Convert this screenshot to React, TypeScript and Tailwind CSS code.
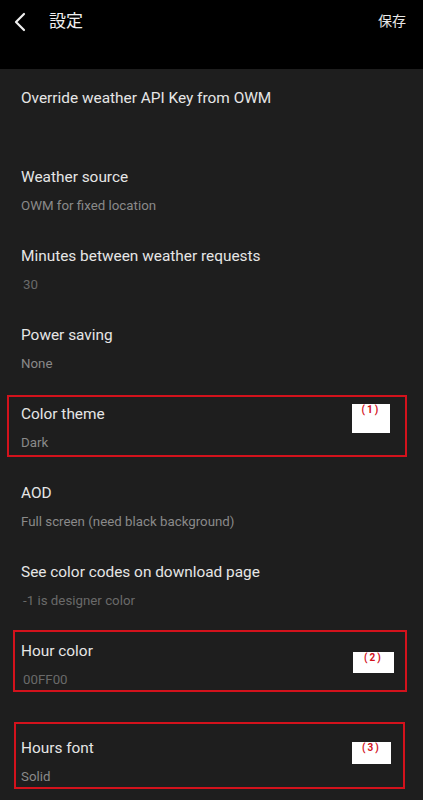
import type { ReactNode } from "react";

type Pref = { title: string; summary?: string; dim?: boolean };

const prefs: Pref[] = [
  { title: "Override weather API Key from OWM" },
  { title: "Weather source", summary: "OWM for fixed location" },
  { title: "Minutes between weather requests", summary: "30", dim: true },
  { title: "Power saving", summary: "None" },
  { title: "Color theme", summary: "Dark" },
  { title: "AOD", summary: "Full screen (need black background)" },
  { title: "See color codes on download page", summary: "-1 is designer color", dim: true },
  { title: "Hour color", summary: "00FF00", dim: true },
];

function Item({ pref, children }: { pref: Pref; children?: ReactNode }) {
  return (
    <div className="relative h-[79px] px-[21px] pt-[19px]">
      <div className="h-5 text-[15.4px] leading-5 text-[#e6e6e6]">{pref.title}</div>
      <div
        className={`mt-[9px] h-5 text-[13.3px] leading-5 ${
          pref.dim ? "pl-[2px] text-[#6a6a6a]" : "text-[#8a8a8a]"
        }`}
      >
        {pref.summary}
      </div>
      {children}
    </div>
  );
}

function Mark({ n, box, label }: { n: number; box: string; label: string }) {
  return (
    <>
      <div className={`pointer-events-none absolute border-2 border-[#d3121c] ${box}`} />
      <div className={`absolute flex justify-center bg-white ${label}`}>
        <span className="text-[10px] font-bold leading-[12px] tracking-[2px] text-[#d3121c]">({n})</span>
      </div>
    </>
  );
}

export default function App() {
  return (
    <div
      className="h-[800px] w-[423px] overflow-hidden bg-[#1e1e1e]"
      style={{ fontFamily: 'Roboto, "Noto Sans CJK JP", sans-serif' }}
    >
      <header className="flex h-[69px] items-start bg-black px-[13px] pt-[10px] text-white">
        <svg width="14" height="22" viewBox="0 0 14 22" className="mt-[1px]">
          <path d="M11 3 L3 11 L11 19" fill="none" stroke="#f0f0f0" strokeWidth="2.2" strokeLinecap="round" strokeLinejoin="round" />
        </svg>
        <h1 className="ml-[22px] text-[17px] leading-[22px] text-[#f0f0f0]">設定</h1>
        <button className="ml-auto mr-[4px] mt-[1px] text-[14px] leading-[20px] text-[#e8e8e8]">保存</button>
      </header>
      <div>
        {prefs.map((p) => (
          <Item key={p.title} pref={p}>
            {p.title === "Color theme" && (
              <Mark n={1} box="left-[7px] top-[10px] h-[62px] w-[400px]" label="left-[352px] top-[19px] h-[29px] w-[38px]" />
            )}
            {p.title === "Hour color" && (
              <Mark n={2} box="left-[13px] top-[8px] h-[62px] w-[394px]" label="left-[353px] top-[30px] h-[21px] w-[41px]" />
            )}
          </Item>
        ))}
        <div className="h-[18px]" />
        <Item pref={{ title: "Hours font", summary: "Solid" }}>
          <Mark n={3} box="left-[14px] top-[3px] h-[67px] w-[391px]" label="left-[352px] top-[23px] h-[22px] w-[39px]" />
        </Item>
      </div>
    </div>
  );
}
